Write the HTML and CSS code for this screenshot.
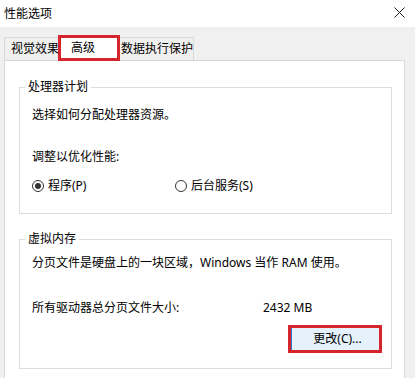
FILE: index.html
```html
<!DOCTYPE html>
<html lang="zh-CN">
<head>
<meta charset="utf-8">
<title>性能选项</title>
<link rel="stylesheet" href="styles.css">
</head>
<body>
<div class="window">
  <div class="titlebar">
    <span class="title">性能选项</span>
    <svg class="close" width="11" height="11" viewBox="0 0 11 11"><path d="M0.5 0.5 L10.5 10.5 M10.5 0.5 L0.5 10.5" stroke="#1a1a1a" stroke-width="1" fill="none"/></svg>
  </div>
  <div class="main">
    <div class="tabs">
      <div class="tab tab-visual">视觉效果</div>
      <div class="tab tab-active">高级</div>
      <div class="tab tab-dep">数据执行保护</div>
    </div>
    <div class="panel">
      <fieldset class="group group-cpu">
        <legend>处理器计划</legend>
        <div class="group-body">
          <p class="line">选择如何分配处理器资源。</p>
          <p class="line adjust">调整以优化性能:</p>
          <div class="radios">
            <label class="radio"><span class="dot checked"></span>程序(P)</label>
            <label class="radio"><span class="dot"></span>后台服务(S)</label>
          </div>
        </div>
      </fieldset>
      <fieldset class="group group-vm">
        <legend>虚拟内存</legend>
        <div class="group-body vm-body">
          <p class="line">分页文件是硬盘上的一块区域，Windows 当作 RAM 使用。</p>
          <div class="size-row">
            <span>所有驱动器总分页文件大小:</span>
            <span>2432 MB</span>
          </div>
          <div class="btn-row">
            <div class="highlight">
              <button class="btn">更改(C)...</button>
            </div>
          </div>
        </div>
      </fieldset>
    </div>
  </div>
</div>
</body>
</html>
```

FILE: styles.css
```css
html, body {
  margin: 0;
  padding: 0;
}
body {
  width: 415px;
  height: 378px;
  overflow: hidden;
  font-family: "Noto Sans", "Noto Sans CJK SC", sans-serif;
  font-size: 12px;
  line-height: 16px;
  color: #000;
  background: #f0f0f0;
}
.window {
  width: 415px;
  height: 378px;
  display: flex;
  flex-direction: column;
}
.titlebar {
  height: 27px;
  flex: none;
  background: #fff;
  display: flex;
  align-items: center;
  justify-content: space-between;
  padding: 0 10px 0 4px;
  box-sizing: border-box;
}
.close {
  display: block;
  margin-top: -2px;
}
.main {
  flex: 1;
  background: #f0f0f0;
  padding: 8px 10px 0 4px;
  display: flex;
  flex-direction: column;
  min-height: 0;
}
.tabs {
  display: flex;
  align-items: flex-end;
  height: 26px;
  margin-bottom: -1px;
  position: relative;
  z-index: 1;
}
.tab {
  box-sizing: border-box;
  height: 23px;
  margin-bottom: 1px;
  border: 1px solid #d9d9d9;
  border-bottom: none;
  background: #f0f0f0;
  display: flex;
  align-items: center;
  white-space: nowrap;
}
.tab-visual {
  width: 54px;
  padding-left: 6px;
  border-right: none;
  overflow: hidden;
}
.tab-active {
  width: 62px;
  height: 26px;
  margin-bottom: 0;
  border: 3px solid #d7252e;
  background: #fff;
  padding-left: 10px;
}
.tab-dep {
  width: 74px;
  padding-left: 1px;
  border-left: none;
}
.panel {
  flex: 1;
  background: #fff;
  border: 1px solid #d9d9d9;
  border-bottom: none;
  padding: 18px 12px 0 14px;
}
.group {
  margin: 0;
  padding: 0;
  border: 1px solid #dcdcdc;
  min-width: 0;
}
.group legend {
  margin-left: 5px;
  padding: 0 3px;
  line-height: 16px;
}
.group-body {
  padding: 12px 0 19px 12px;
}
.line {
  margin: 0;
}
.adjust {
  margin-top: 26px;
}
.radios {
  margin-top: 13px;
  display: grid;
  grid-template-columns: 143px auto;
}
.radio {
  display: flex;
  align-items: center;
  gap: 4px;
}
.dot {
  box-sizing: border-box;
  width: 12px;
  height: 12px;
  border: 1px solid #333;
  border-radius: 50%;
  display: flex;
  align-items: center;
  justify-content: center;
}
.dot.checked::after {
  content: "";
  width: 6px;
  height: 6px;
  border-radius: 50%;
  background: #333;
}
.group-vm {
  margin-top: 17px;
}
.vm-body {
  padding: 8px 9px 15px 12px;
}
.size-row {
  margin-top: 29px;
  display: grid;
  grid-template-columns: 231px auto;
}
.btn-row {
  margin-top: 9px;
  display: flex;
  justify-content: flex-end;
}
.highlight {
  border: 3px solid #d7252e;
  width: 88px;
  height: 22px;
}
.btn {
  display: block;
  box-sizing: border-box;
  width: 88px;
  height: 22px;
  margin: 0;
  padding: 0 0 0 4px;
  border: none;
  border-left: 1px solid #2a7ad2;
  background: #e5f1fb;
  font: inherit;
  color: #000;
  text-align: center;
}
```
